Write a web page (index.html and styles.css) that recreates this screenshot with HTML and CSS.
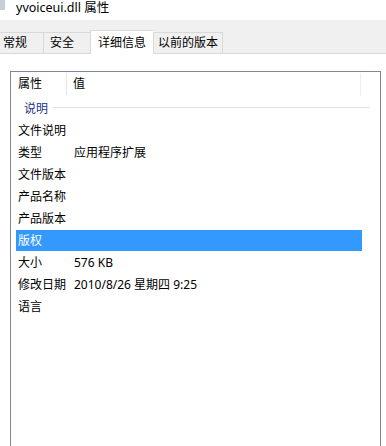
FILE: index.html
```html
<!DOCTYPE html>
<html>
<head>
<meta charset="utf-8">
<link rel="stylesheet" href="styles.css">
</head>
<body>
<div class="titlebar"><span class="appicon"></span><span class="title">yvoiceui.dll 属性</span></div>
<div class="tabstrip">
  <div class="tab t1">常规</div>
  <div class="tab t2">安全</div>
  <div class="tab t3 selected">详细信息</div>
  <div class="tab t4">以前的版本</div>
</div>
<div class="content">
  <div class="listbox">
    <div class="header">
      <div class="hcol1">属性</div>
      <div class="hcol2">值</div>
    </div>
    <div class="group"><span class="gname">说明</span><span class="gline"></span></div>
    <div class="row"><span class="k">文件说明</span><span class="v"></span></div>
    <div class="row"><span class="k">类型</span><span class="v">应用程序扩展</span></div>
    <div class="row"><span class="k">文件版本</span><span class="v"></span></div>
    <div class="row"><span class="k">产品名称</span><span class="v"></span></div>
    <div class="row"><span class="k">产品版本</span><span class="v"></span></div>
    <div class="row sel"><span class="k">版权</span><span class="v"></span></div>
    <div class="row"><span class="k">大小</span><span class="v">576 KB</span></div>
    <div class="row"><span class="k">修改日期</span><span class="v">2010/8/26 星期四 9:25</span></div>
    <div class="row"><span class="k">语言</span><span class="v"></span></div>
  </div>
</div>
</body>
</html>
```
FILE: styles.css
```css
html, body {
  margin: 0;
  padding: 0;
  background: #ffffff;
  overflow: hidden;
}
body {
  width: 386px;
  height: 446px;
  font-family: "Noto Sans", "Noto Sans CJK SC", sans-serif;
  font-size: 12px;
  color: #000;
}
.titlebar {
  height: 20px;
  display: flex;
  align-items: flex-start;
  background: #fff;
}
.appicon {
  display: block;
  width: 5px;
  height: 10px;
  margin-right: 11px;
  background: #c9ced6;
}
.title {
  line-height: 15px;
  font-size: 12.5px;
  color: #000;
}
.tabstrip {
  height: 33px;
  background: #f0f0f0;
  border-bottom: 1px solid #d9d9d9;
  display: flex;
  align-items: flex-end;
}
.tab {
  box-sizing: border-box;
  height: 21px;
  line-height: 19px;
  border-top: 1px solid #d9d9d9;
  border-left: 1px solid #d9d9d9;
  background: #f0f0f0;
  white-space: nowrap;
}
.t1 { margin-left: -1px; width: 44px; padding-left: 3px; }
.t2 { width: 47px; padding-left: 6px; }
.t3 { width: 63px; padding-left: 7px; }
.t4 { width: 70px; padding-left: 4px; border-right: 1px solid #d9d9d9; }
.tab.selected {
  height: 24px;
  line-height: 23px;
  background: #ffffff;
  margin-bottom: -1px;
  position: relative;
}
.content {
  background: #fff;
  padding-top: 17px;
}
.listbox {
  margin-left: 10px;
  width: 371px;
  height: 375px;
  box-sizing: border-box;
  border: 1px solid #828790;
  border-bottom: none;
  background: #fff;
}
.header {
  height: 24px;
  display: flex;
  align-items: stretch;
}
.hcol1 {
  width: 56px;
  padding-left: 7px;
  box-sizing: border-box;
  border-right: 1px solid #e5e5e5;
  margin-top: 1px;
  margin-bottom: 1px;
  line-height: 22px;
}
.hcol2 {
  width: 294px;
  box-sizing: border-box;
  padding-left: 6px;
  border-right: 1px solid #eeeeee;
  margin-top: 1px;
  line-height: 22px;
}
.group {
  height: 24px;
  display: flex;
  align-items: center;
  padding-left: 13px;
  padding-right: 10px;
}
.gname {
  color: #1e3287;
}
.gline {
  flex: 1;
  height: 1px;
  background: #e2e2e2;
  margin-left: 5px;
  margin-top: -1px;
}
.row {
  height: 22px;
  line-height: 22px;
  margin-left: 5px;
  width: 346px;
  display: flex;
  white-space: nowrap;
}
.row .k {
  width: 52px;
  padding-left: 2px;
  box-sizing: border-box;
}
.row .v {
  padding-left: 6px;
}
.row.sel {
  background: #3399ff;
  color: #ffffff;
  height: 21px;
  line-height: 21px;
  margin-bottom: 1px;
}
```
